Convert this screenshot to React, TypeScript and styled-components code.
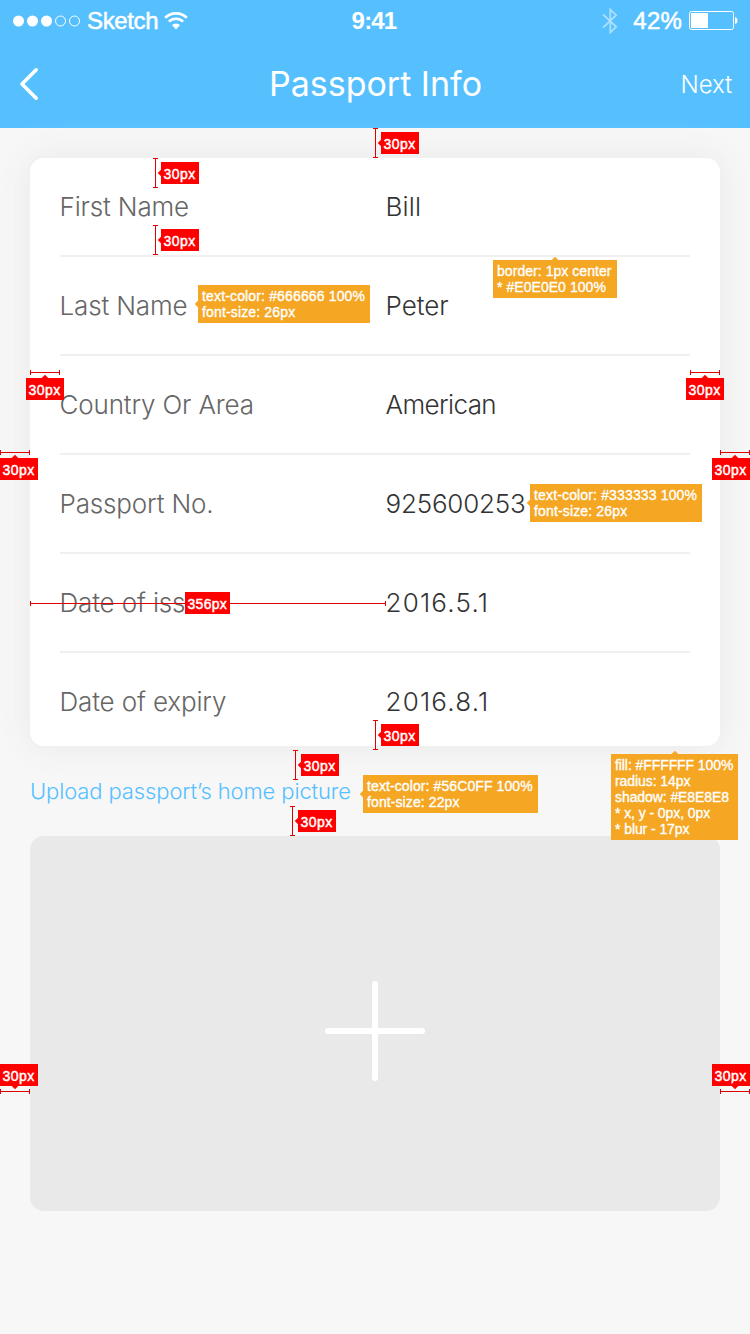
import React from 'react';
import styled, { createGlobalStyle, css } from 'styled-components';

const GlobalStyle = createGlobalStyle`
  * { box-sizing: border-box; }
  body {
    margin: 0;
    background: #f7f7f7;
    font-family: Inter, "Noto Sans", sans-serif;
    font-weight: 330;
  }
`;

const Screen = styled.div`
  position: relative;
  width: 750px;
  height: 1334px;
  overflow: hidden;
  background: #f7f7f7;
`;

const Header = styled.header`
  height: 128px;
  background: #56c0ff;
  color: #fff;
`;

const StatusBar = styled.div`
  display: grid;
  grid-template-columns: 1fr auto 1fr;
  align-items: center;
  height: 41px;
  padding: 0 12px 0 13px;
  font: 400 24px/1 "Liberation Sans", Arial, sans-serif;
  -webkit-text-stroke: 0.5px #fff;

  svg { display: block; }
`;

const StatusGroup = styled.div<{ $end?: boolean }>`
  display: flex;
  align-items: center;
  justify-content: ${p => (p.$end ? 'flex-end' : 'flex-start')};
`;

const Carrier = styled.span`
  margin: 1px 6px 0 6px;
  letter-spacing: -0.35px;
`;

const Clock = styled.span`
  margin: 1px 3px 0 0;
  font-weight: 700;
  letter-spacing: -0.8px;
  -webkit-text-stroke: 0;
`;

const Percent = styled.span`
  margin: 1px 7px 0 15px;
  letter-spacing: 0.2px;
`;

const NavBar = styled.nav`
  display: grid;
  grid-template-columns: 1fr auto 1fr;
  align-items: center;
  height: 87px;
  padding: 0 18px 1px 19px;
`;

const BackIcon = styled.svg`
  display: block;
`;

const Title = styled.h1`
  margin: 0;
  font-size: 34px;
  font-weight: 370;
  line-height: 40px;
`;

const NextButton = styled.a`
  justify-self: end;
  padding-top: 2px;
  font-size: 24px;
  line-height: 30px;
  letter-spacing: -0.1px;
`;

const Content = styled.main`
  padding: 30px 30px 0;
`;

const Card = styled.section`
  height: 588px;
  padding: 0 30px;
  border-radius: 14px;
  background: #fff;
  box-shadow: 0 0 34px #e8e8e8;
`;

const Row = styled.div`
  display: grid;
  grid-template-columns: 326px 1fr;
  align-items: center;
  height: 99px;
  border-bottom: 2px solid #f0f0f0;
  font-size: 26px;
  line-height: 37px;

  &:last-child { border-bottom-color: transparent; }
`;

const Label = styled.span`
  margin-left: -0.5px;
  color: #666;
  letter-spacing: -0.15px;
`;

const Value = styled.span<{ $spacing?: number }>`
  margin-left: -0.5px;
  color: #333;
  letter-spacing: ${p => p.$spacing ?? 0}px;
`;

const UploadLabel = styled.p`
  margin: 0;
  color: #56c0ff;
  font-size: 22px;
  line-height: 90px;
  letter-spacing: -0.12px;
`;

const UploadBox = styled.button`
  display: flex;
  align-items: center;
  justify-content: center;
  width: 690px;
  height: 375px;
  padding: 14px 0 0;
  border: 0;
  border-radius: 14px;
  background: #e9e9e9;
`;

type Side = 'left' | 'up' | 'down';

const arrow = (side: Side, color: string, center = '50%') => css`
  &::before {
    content: '';
    position: absolute;
    width: 6px;
    height: 6px;
    background: ${color};
    transform: rotate(45deg);
    ${side === 'left' && 'left: -2px; top: calc(50% - 3px);'}
    ${side === 'up' && `top: -2px; left: calc(${center} - 3px);`}
    ${side === 'down' && `bottom: -2px; left: calc(${center} - 3px);`}
  }
`;

const Measure = styled.i<{ $x: number; $y: number; $length: number; $vertical?: boolean }>`
  position: absolute;
  left: ${p => p.$x}px;
  top: ${p => p.$y}px;
  width: ${p => (p.$vertical ? 5 : p.$length)}px;
  height: ${p => (p.$vertical ? p.$length : 5)}px;
  border: 0 solid #e00000;
  border-width: ${p => (p.$vertical ? '1px 0' : '0 1px')};
  background: linear-gradient(#e00000, #e00000) center / ${p => (p.$vertical ? '1px 100%' : '100% 1px')} no-repeat;
`;

const Distance = styled.span<{ $x: number; $y: number; $width?: number; $side?: Side; $center?: string }>`
  position: absolute;
  left: ${p => p.$x}px;
  top: ${p => p.$y}px;
  width: ${p => p.$width ?? 38}px;
  height: 22px;
  padding: 2px 0 0 2.5px;
  background: #f00;
  color: #fff;
  font: 400 14px/20px "Liberation Sans", Arial, sans-serif;
  letter-spacing: ${p => (p.$width ? 0.3 : 0.45)}px;
  white-space: nowrap;
  -webkit-text-stroke: 0.45px #fff;
  ${p => p.$side && arrow(p.$side, '#f00', p.$center)}
`;

const Note = styled.div<{ $x: number; $y: number; $width: number; $side: Side; $spacing: number }>`
  position: absolute;
  left: ${p => p.$x}px;
  top: ${p => p.$y}px;
  width: ${p => p.$width}px;
  padding: 3px 0 3px 4px;
  background: #f5a623;
  color: #fff;
  font: 400 14px/16px "Liberation Sans", Arial, sans-serif;
  letter-spacing: ${p => p.$spacing}px;
  white-space: nowrap;
  -webkit-text-stroke: 0.35px #fff;
  ${p => arrow(p.$side, '#f5a623')}
`;

const fields: { label: string; value: string; spacing?: number }[] = [
  { label: 'First Name', value: 'Bill', spacing: 0.2 },
  { label: 'Last Name', value: 'Peter', spacing: 0 },
  { label: 'Country Or Area', value: 'American', spacing: -0.6 },
  { label: 'Passport No.', value: '925600253', spacing: -0.2 },
  { label: 'Date of issue', value: '2016.5.1', spacing: 1.2 },
  { label: 'Date of expiry', value: '2016.8.1', spacing: 1.2 },
];

const distances: {
  line: [number, number];
  vertical?: boolean;
  box: [number, number];
  side: Side;
  center?: string;
}[] = [
  { line: [373, 128], vertical: true, box: [381, 132], side: 'left' },
  { line: [153, 158], vertical: true, box: [161, 162], side: 'left' },
  { line: [153, 225], vertical: true, box: [161, 229], side: 'left' },
  { line: [30, 370], box: [26, 378], side: 'up' },
  { line: [690, 370], box: [686, 378], side: 'up' },
  { line: [0, 450], box: [0, 458], side: 'up', center: '15px' },
  { line: [720, 450], box: [712, 458], side: 'up', center: '23px' },
  { line: [373, 720], vertical: true, box: [381, 724], side: 'left' },
  { line: [293, 750], vertical: true, box: [301, 754], side: 'left' },
  { line: [290, 806], vertical: true, box: [298, 810], side: 'left' },
  { line: [0, 1089], box: [0, 1064], side: 'down', center: '15px' },
  { line: [720, 1089], box: [712, 1064], side: 'down', center: '23px' },
];

const notes: { at: [number, number]; width: number; side: Side; spacing: number; lines: string[] }[] = [
  { at: [198, 285], width: 172, side: 'left', spacing: 0.15, lines: ['text-color: #666666 100%', 'font-size: 26px'] },
  { at: [493, 260], width: 124, side: 'up', spacing: 0.05, lines: ['border: 1px center', '* #E0E0E0 100%'] },
  { at: [530, 484], width: 172, side: 'left', spacing: 0.15, lines: ['text-color: #333333 100%', 'font-size: 26px'] },
  { at: [363, 775], width: 175, side: 'left', spacing: 0.1, lines: ['text-color: #56C0FF 100%', 'font-size: 22px'] },
  {
    at: [611, 754],
    width: 127,
    side: 'up',
    spacing: -0.08,
    lines: ['fill: #FFFFFF 100%', 'radius: 14px', 'shadow: #E8E8E8', '* x, y - 0px, 0px', '* blur - 17px'],
  },
];

const Signal = () => (
  <svg width="68" height="12" viewBox="0 0 68 12">
    {[5.5, 19.5, 33.5].map(x => <circle key={x} cx={x} cy="6" r="5.5" fill="#fff" />)}
    {[47.5, 61.5].map(x => <circle key={x} cx={x} cy="6" r="5" fill="none" stroke="#fff" />)}
  </svg>
);

const Wifi = () => (
  <svg width="24" height="18" viewBox="0 0 24 18">
    <path d="M1.2 5.8a15.6 15.6 0 0 1 21.6 0" fill="none" stroke="#fff" strokeWidth="2.7" />
    <path d="M4.9 9.7a10.2 10.2 0 0 1 14.2 0" fill="none" stroke="#fff" strokeWidth="2.5" />
    <path d="M8 13a5.8 5.8 0 0 1 8 0l-4 4.4z" fill="#fff" />
  </svg>
);

const Bluetooth = () => (
  <svg width="16" height="26" viewBox="0 0 16 26">
    <path d="M1 6.3L14.2 18.8L8.3 24.4V1.6L14.2 7.2L1 19.7" fill="none" stroke="#fff" strokeWidth="1.8" opacity="0.5" />
  </svg>
);

const Battery = () => (
  <svg width="49" height="19" viewBox="0 0 49 19">
    <rect x="0.5" y="0.5" width="44" height="18" rx="2" fill="none" stroke="#fff" />
    <rect x="2" y="2" width="17" height="15" fill="#fff" />
    <path d="M46 6c3.4 1 3.4 6 0 7z" fill="#fff" />
  </svg>
);

export default function App() {
  return (
    <Screen>
      <GlobalStyle />
      <Header>
        <StatusBar>
          <StatusGroup>
            <Signal />
            <Carrier>Sketch</Carrier>
            <Wifi />
          </StatusGroup>
          <Clock>9:41</Clock>
          <StatusGroup $end>
            <Bluetooth />
            <Percent>42%</Percent>
            <Battery />
          </StatusGroup>
        </StatusBar>
        <NavBar>
          <BackIcon width="20" height="34" viewBox="0 0 20 34">
            <path d="M17.2 2.8L3 17l14.2 14.2" fill="none" stroke="#fff" strokeWidth="3.6" strokeLinecap="round" strokeLinejoin="round" />
          </BackIcon>
          <Title>Passport Info</Title>
          <NextButton>Next</NextButton>
        </NavBar>
      </Header>

      <Content>
        <Card>
          {fields.map(f => (
            <Row key={f.label}>
              <Label>{f.label}</Label>
              <Value $spacing={f.spacing}>{f.value}</Value>
            </Row>
          ))}
        </Card>
        <UploadLabel>Upload passport’s home picture</UploadLabel>
        <UploadBox aria-label="Add picture">
          <svg width="100" height="100" viewBox="0 0 100 100">
            <path d="M50 3v94M3 50h94" stroke="#fff" strokeWidth="6" strokeLinecap="round" />
          </svg>
        </UploadBox>
      </Content>

      {distances.map(d => (
        <React.Fragment key={d.box.join()}>
          <Measure $x={d.line[0]} $y={d.line[1]} $length={30} $vertical={d.vertical} />
          <Distance $x={d.box[0]} $y={d.box[1]} $side={d.side} $center={d.center}>30px</Distance>
        </React.Fragment>
      ))}
      <Measure $x={30} $y={601} $length={356} />
      <Distance $x={185} $y={592} $width={45}>356px</Distance>
      {notes.map(n => (
        <Note key={n.at.join()} $x={n.at[0]} $y={n.at[1]} $width={n.width} $side={n.side} $spacing={n.spacing}>
          {n.lines.map(line => <div key={line}>{line}</div>)}
        </Note>
      ))}
    </Screen>
  );
}
